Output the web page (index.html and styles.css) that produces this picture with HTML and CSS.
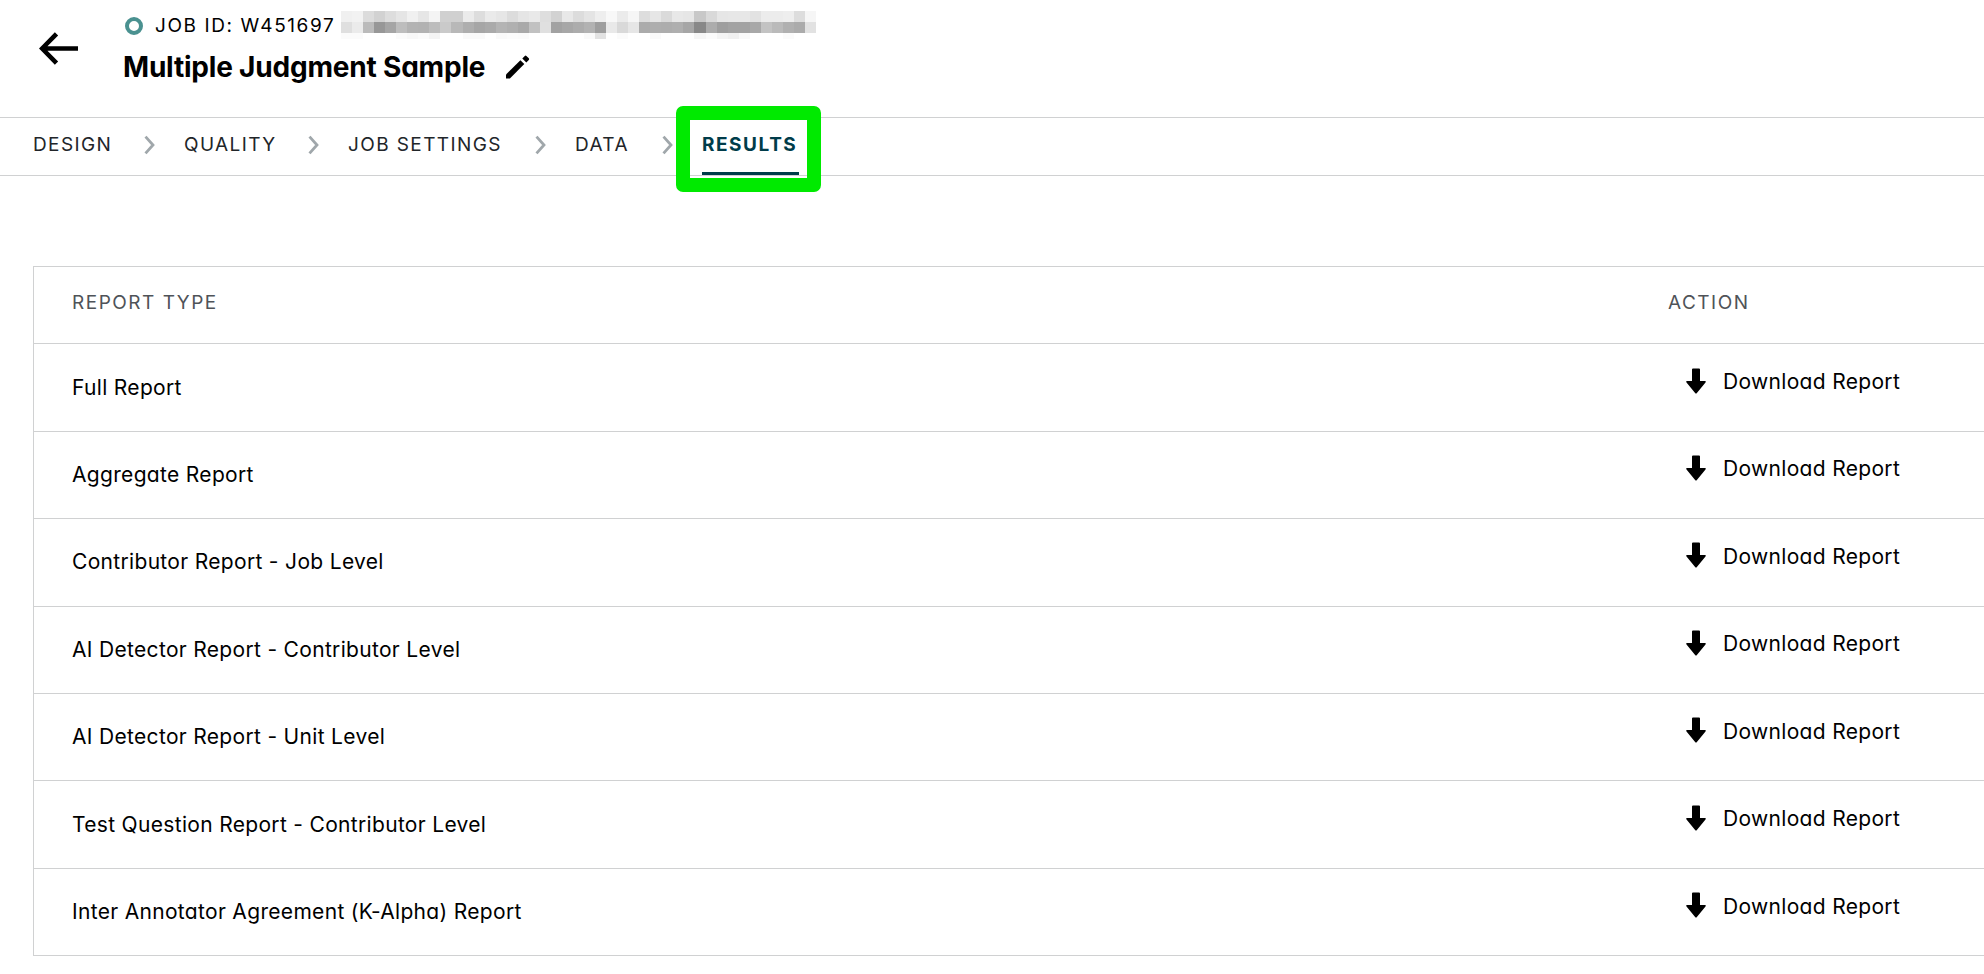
FILE: index.html
```
<!DOCTYPE html>
<html lang="en">
<head>
    <meta charset="UTF-8">
    <meta name="viewport" content="width=device-width, initial-scale=1.0">
    <title>Multiple Judgment Sample</title>
    <link rel="stylesheet" href="styles.css">
</head>
<body>
    <header class="header">
        <svg class="back" width="40" height="34" viewBox="0 0 40 34" fill="none" stroke="#000" stroke-width="4.6">
            <path d="M39 16.5H4M17.5 1.8L3.1 16.5L17.5 31.2" />
        </svg>
        <div class="job">
            <div class="job-line">
                <span class="status"></span>
                <span class="job-id">JOB ID: W451697</span>
                <div id="redacted" class="redacted"></div>
            </div>
            <div class="title-line">
                <h1>Multiple Judgment Sample</h1>
                <svg width="26" height="26" viewBox="0 0 26 26">
                    <path d="M1 24.5V20.6L15.4 6.2L19.3 10.1L4.9 24.5Z" />
                    <path d="M17.3 4.4L19.8 1.9Q20.6 1.1 21.4 1.9L23.8 4.3Q24.6 5.1 23.8 5.9L21.3 8.4Z" />
                </svg>
            </div>
        </div>
    </header>

    <nav class="steps">
        <div class="step">DESIGN <svg class="chevron" viewBox="0 0 11 20"><path d="M1.5 1.6L9 10L1.5 18.4" /></svg></div>
        <div class="step">QUALITY <svg class="chevron" viewBox="0 0 11 20"><path d="M1.5 1.6L9 10L1.5 18.4" /></svg></div>
        <div class="step">JOB SETTINGS <svg class="chevron" viewBox="0 0 11 20"><path d="M1.5 1.6L9 10L1.5 18.4" /></svg></div>
        <div class="step">DATA <svg class="chevron" viewBox="0 0 11 20"><path d="M1.5 1.6L9 10L1.5 18.4" /></svg></div>
        <div class="step active">RESULTS<span class="highlight"></span></div>
    </nav>

    <main class="reports">
        <div class="row head">
            <div>REPORT TYPE</div>
            <div>ACTION</div>
        </div>
        <div id="rows"></div>
    </main>

    <script>
        const reports = [
            "Full Report",
            "Aggregate Report",
            "Contributor Report - Job Level",
            "AI Detector Report - Contributor Level",
            "AI Detector Report - Unit Level",
            "Test Question Report - Contributor Level",
            "Inter Annotator Agreement (K-Alpha) Report"
        ];

        document.getElementById('rows').innerHTML = reports.map(name => `
            <div class="row">
                <div class="name">${name}</div>
                <div class="action">
                    <svg width="20" height="26" viewBox="0 0 20 26">
                        <path d="M7 0.5H13Q14 0.5 14 1.5V13H19Q20.4 13.2 19.5 14.4L10.9 25Q10 26 9.1 25L0.5 14.4Q-0.4 13.2 1 13H6V1.5Q6 0.5 7 0.5Z" />
                    </svg>
                    <span>Download Report</span>
                </div>
            </div>`).join('');

        // Grey levels of the pixelated text, one hex pair per block
        const levels = [
            "f0f2dcd2dde5f0e6f4d0d0ebddeae6dce5e9ded2e8dce4eef8ebf6dde6dae8e6c8d9e6e7e7e2ececeeddf6",
            "dfebbb97a5bdb3b2bdcab8aea6aab4b0a9c1e0a2a7acb29ee9d9e6abaeadafa688ac9ea2a2a8c3bab0abe2",
            "fbfbfffffffbf8fbf4fffffafafffafcfbfffffffffffae2fffbfffffafffffff6fbf4f0f9fffffffbffff"
        ];
        const redacted = document.getElementById('redacted');
        levels.forEach(line => {
            line.match(/../g).forEach(level => {
                const block = document.createElement('i');
                block.style.background = `#${level}${level}${level}`;
                redacted.appendChild(block);
            });
        });
    </script>
</body>
</html>
```
FILE: styles.css
```
* {
    box-sizing: border-box;
}
body {
    margin: 0;
    font-family: Inter, "Liberation Sans", sans-serif;
    font-feature-settings: "cv11";
    background-color: #fff;
    color: #000;
    overflow: hidden;
}
svg {
    display: block;
    flex-shrink: 0;
}
.header {
    height: 118px;
    padding: 11px 0 0 38px;
    display: flex;
    border-bottom: 1px solid #d0d1d2;
}
.back {
    margin: 21px 46px 0 1px;
}
.job-line {
    display: flex;
    align-items: center;
    height: 28px;
}
.status {
    width: 18px;
    height: 18px;
    margin: 2px 12px 0 0;
    border: 4px solid #4a9190;
    border-radius: 50%;
}
.job-id {
    width: 186px;
    font-size: 19px;
    letter-spacing: 1.6px;
    white-space: nowrap;
}
.redacted {
    display: grid;
    grid-template-columns: repeat(43, 1fr);
    grid-template-rows: 11px 11px 6px;
    width: 475px;
    height: 28px;
}
.title-line {
    display: flex;
    align-items: center;
    height: 40px;
    margin-top: 8px;
}
h1 {
    width: 382px;
    margin: 0 0 0 -2px;
    font-size: 28px;
    font-weight: 700;
    letter-spacing: -0.2px;
    white-space: nowrap;
}
.steps {
    display: grid;
    grid-template-columns: 151px 164px 227px 127px 97px;
    height: 58px;
    padding-left: 33px;
    border-bottom: 1px solid #d0d1d2;
    font-size: 19px;
    letter-spacing: 1.4px;
    color: #212529;
}
.step {
    position: relative;
    display: flex;
    align-items: center;
    justify-content: space-between;
    padding: 0 29px 4px 0;
    white-space: nowrap;
}
.chevron {
    width: 11px;
    height: 20px;
    fill: none;
    stroke: #a0a7ab;
    stroke-width: 2.8;
}
.active {
    padding: 3px 0 4px;
    border-bottom: 3px solid #003c4a;
    color: #003c4a;
    font-weight: 700;
    letter-spacing: 1.55px;
}
.highlight {
    position: absolute;
    top: -12px;
    left: -26px;
    width: 145px;
    height: 86px;
    border: 14px solid #00ea00;
    border-radius: 7px;
}
.reports {
    margin: 90px 0 0 33px;
    border-top: 1px solid #d0d1d2;
    border-left: 1px solid #d0d1d2;
}
.row {
    display: grid;
    grid-template-columns: 1596px 1fr;
    align-items: center;
    height: 87.43px;
    padding-left: 38px;
    border-bottom: 1px solid #d0d1d2;
    font-size: 21px;
    letter-spacing: 0.32px;
}
.head {
    height: 77.3px;
    padding-bottom: 5px;
    font-size: 19px;
    letter-spacing: 1.5px;
    color: #4f5358;
}
.name {
    padding-bottom: 1px;
}
.action {
    display: flex;
    align-items: center;
    gap: 17px;
    padding: 0 0 12px 18px;
}
.action svg {
    margin-bottom: 2px;
}
```
